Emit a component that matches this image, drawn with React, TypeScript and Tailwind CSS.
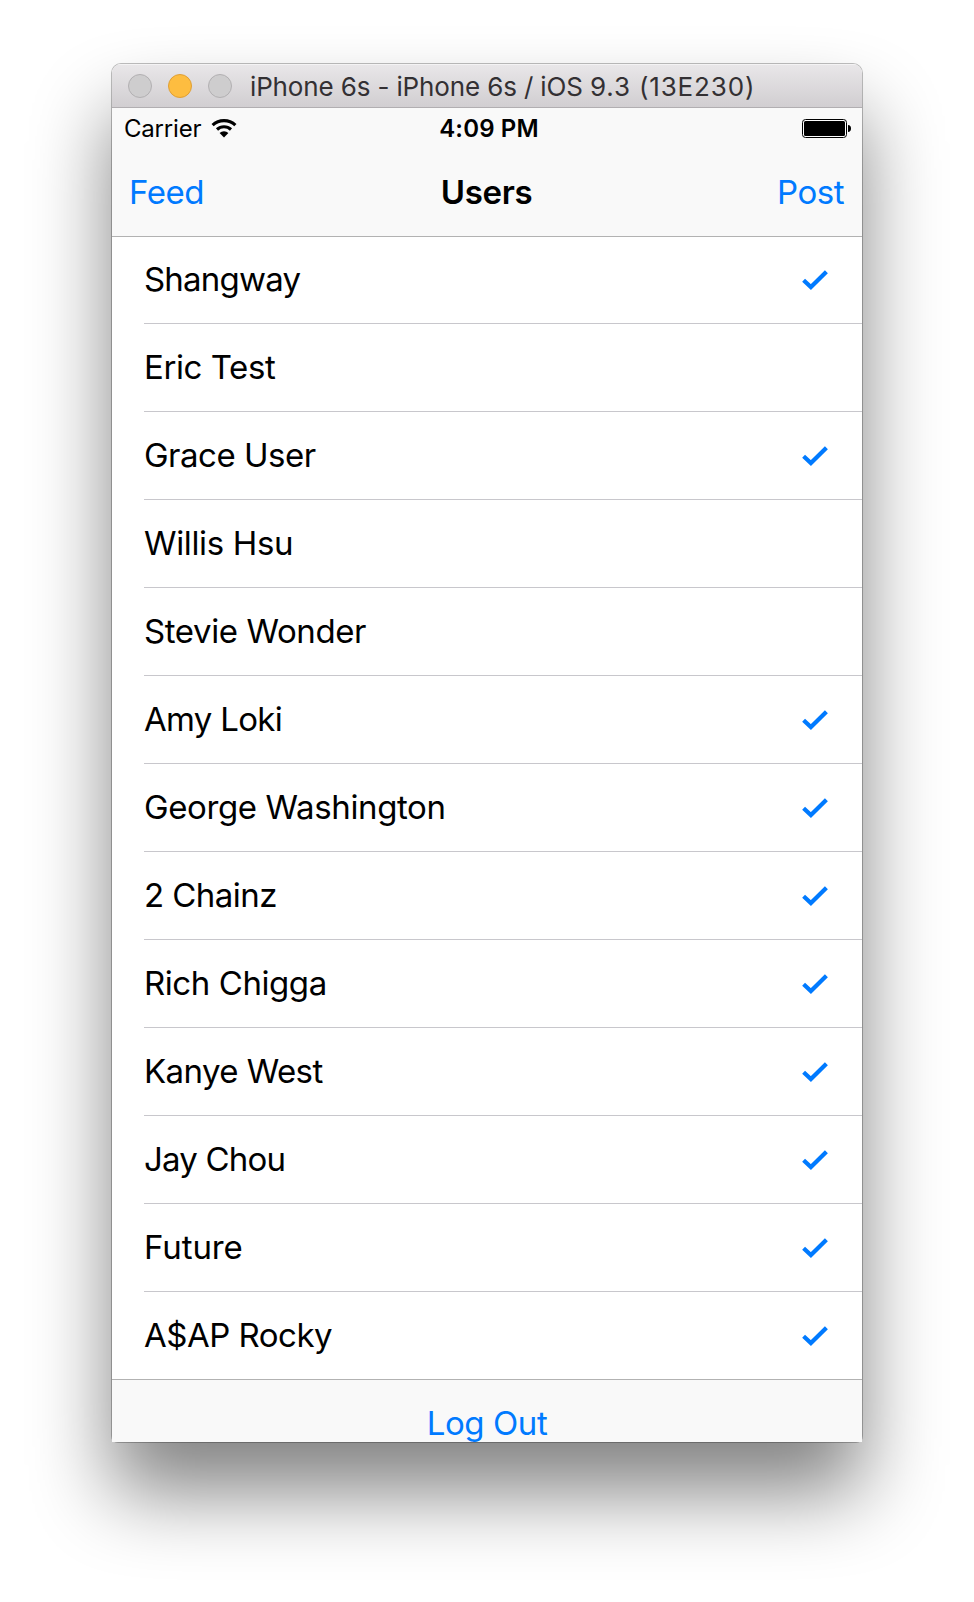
import React from "react";

type User = { name: string; following: boolean; tracking: string };

const users: User[] = [
  { name: "Shangway", following: true, tracking: "tracking-[-0.8px]" },
  { name: "Eric Test", following: false, tracking: "tracking-[-0.42px]" },
  { name: "Grace User", following: true, tracking: "tracking-[-0.5px]" },
  { name: "Willis Hsu", following: false, tracking: "tracking-[-0.35px]" },
  { name: "Stevie Wonder", following: false, tracking: "tracking-[-0.4px]" },
  { name: "Amy Loki", following: true, tracking: "tracking-[-0.7px]" },
  { name: "George Washington", following: true, tracking: "tracking-[-0.38px]" },
  { name: "2 Chainz", following: true, tracking: "tracking-[-0.55px]" },
  { name: "Rich Chigga", following: true, tracking: "tracking-[-0.43px]" },
  { name: "Kanye West", following: true, tracking: "tracking-[-0.58px]" },
  { name: "Jay Chou", following: true, tracking: "tracking-[-0.8px]" },
  { name: "Future", following: true, tracking: "tracking-[-0.1px]" },
  { name: "A$AP Rocky", following: true, tracking: "tracking-[-0.5px]" },
];

function Check() {
  return (
    <svg width="28" height="22" viewBox="0 0 28 22" fill="none" className="mr-[33px] shrink-0">
      <path d="M2.6 11.2 L9.9 18 L25.4 2.7" stroke="#007aff" strokeWidth="4.2" />
    </svg>
  );
}

function Wifi() {
  return (
    <svg width="26" height="20" viewBox="0 0 26 20" className="ml-[10px]" fill="none" stroke="#000" strokeWidth="3.1">
      <path d="M1.6 7.2 A16.4 16.4 0 0 1 24.4 7.2" />
      <path d="M6 11.5 A10.2 10.2 0 0 1 20 11.5" />
      <path d="M8.6 15 A6.4 6.4 0 0 1 17.4 15 L13 19.4 Z" fill="#000" stroke="none" />
    </svg>
  );
}

function Battery() {
  return (
    <svg width="49" height="19" viewBox="0 0 49 19">
      <rect x="0.5" y="0.5" width="44" height="18" rx="3" fill="#fff" stroke="#000" />
      <rect x="2" y="2" width="41" height="15" rx="1.5" fill="#000" />
      <path d="M46 6 C48 6 49 7.5 49 9.5 C49 11.5 48 13 46 13 Z" fill="#000" />
    </svg>
  );
}

export default function App() {
  return (
    <div className="h-[1602px] w-[974px] overflow-hidden bg-white pt-[64px] pl-[112px] font-[Inter,sans-serif] text-black">
      <div className="h-[1378px] w-[750px] rounded-t-[9px] rounded-b-[6px] shadow-[0_0_0_1px_rgba(0,0,0,0.25),0_50px_80px_rgba(0,0,0,0.49)]">
        <div className="flex h-full flex-col overflow-hidden rounded-t-[9px]">
          <div className="flex h-[44px] shrink-0 items-center border-b border-[#b1aeb1] bg-linear-to-b from-[#e9e7e9] to-[#d1ced1] pl-4 shadow-[inset_0_1px_0_#f4f3f4]">
            <div className="flex gap-4">
              <span className="size-6 rounded-full border border-[#b2b0b2] bg-[#cecdce]" />
              <span className="size-6 rounded-full border border-[#df9f35] bg-[#fdbd40]" />
              <span className="size-6 rounded-full border border-[#b2b0b2] bg-[#cecdce]" />
            </div>
            <span className="ml-[18px] pt-[2px] text-[26px] tracking-[-0.14px] whitespace-pre text-[#333033]">
              iPhone 6s - iPhone 6s / iOS <span className="tracking-[0.85px]">9.3 (13E230)</span>
            </span>
          </div>

          <header className="h-[129px] shrink-0 border-b border-[#b2b2b2] bg-[#f9f9f9]">
            <div className="grid h-10 grid-cols-[1fr_auto_1fr] items-center pr-[11px] pl-3">
              <div className="flex items-center">
                <span className="pt-[2px] text-[24px] tracking-[-0.2px]">Carrier</span>
                <Wifi />
              </div>
              <span className="pt-[2px] pl-[3px] text-[24px] font-semibold tracking-[0.15px]">4:09 PM</span>
              <div className="flex justify-end pt-px">
                <Battery />
              </div>
            </div>
            <div className="grid h-[89px] grid-cols-[1fr_auto_1fr] items-center pr-[18px] pl-[17px] text-[33px]">
              <span className="tracking-[-0.5px] text-[#007aff]">Feed</span>
              <span className="font-semibold tracking-[-0.3px]">Users</span>
              <span className="text-right tracking-[-0.5px] text-[#007aff]">Post</span>
            </div>
          </header>

          <ul className="h-[1142px] shrink-0 bg-white pl-8">
            {users.map((u) => (
              <li
                key={u.name}
                className="group flex h-[88px] items-center justify-between border-b border-[#c8c7cc] first:h-[87px] last:h-[87px] last:border-b-0"
              >
                <span className={`pt-px text-[33px] whitespace-pre group-first:pt-0 group-last:pt-0 ${u.tracking}`}>
                  {u.name}
                </span>
                {u.following && <Check />}
              </li>
            ))}
          </ul>

          <footer className="flex h-[63px] shrink-0 justify-center overflow-hidden border-t border-[#b2b2b2] bg-[#f9f9f9] pt-[23px]">
            <span className="text-[33px] leading-[41px] tracking-[-0.4px] text-[#007aff]">Log Out</span>
          </footer>
        </div>
      </div>
    </div>
  );
}
